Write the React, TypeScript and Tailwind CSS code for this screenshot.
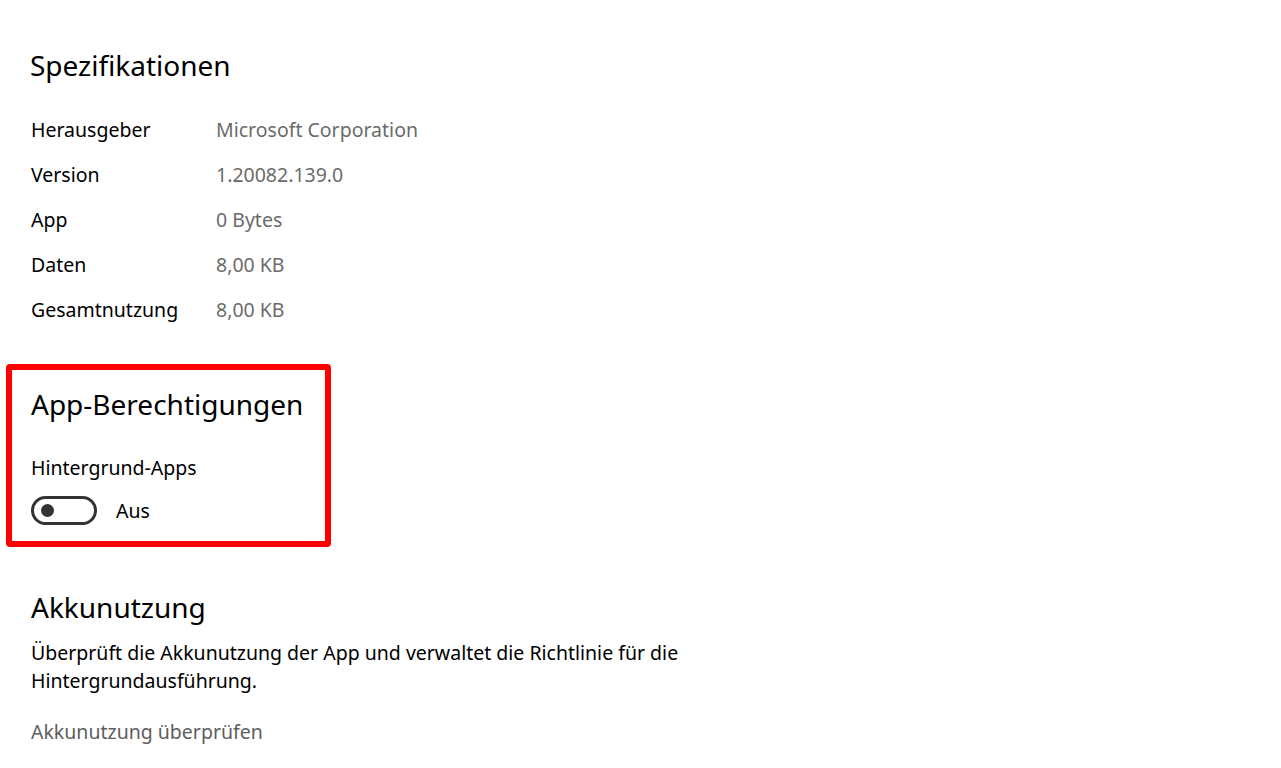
const specs = [
  ["Herausgeber", "Microsoft Corporation"],
  ["Version", "1.20082.139.0"],
  ["App", "0 Bytes"],
  ["Daten", "8,00 KB"],
  ["Gesamtnutzung", "8,00 KB"],
];

export default function App() {
  return (
    <div
      className="min-h-screen bg-white text-black pl-[31px] pt-[45px]"
      style={{ fontFamily: '"Noto Sans", "Open Sans", sans-serif' }}
    >
      <h2 className="text-[28px] leading-[40px] -ml-[1px]">Spezifikationen</h2>

      <div className="mt-[22px]">
        {specs.map(([label, value]) => (
          <div key={label} className="flex h-[45px] items-center text-[19.5px]">
            <span className="w-[185px]">{label}</span>
            <span className="text-[#6b6b6b]">{value}</span>
          </div>
        ))}
      </div>

      <div className="mt-[32px] -ml-[25px] w-[325px] h-[183px] rounded-[4px] border-[6px] border-[#ff0000] pl-[19px] pt-[14px]">
        <h2 className="text-[28px] leading-[40px]">App-Berechtigungen</h2>
        <div className="mt-[30px] text-[19.5px] leading-[28px]">Hintergrund-Apps</div>
        <div className="mt-[14px] flex items-center">
          <div className="w-[66px] h-[29px] rounded-full border-[3px] border-[#333] flex items-center pl-[7px]">
            <div className="w-[13px] h-[13px] rounded-full bg-[#333]" />
          </div>
          <span className="ml-[19px] text-[19.5px]">Aus</span>
        </div>
      </div>

      <h2 className="mt-[40px] text-[28px] leading-[40px]">Akkunutzung</h2>
      <p className="mt-[12px] w-[680px] text-[19.5px] leading-[28px]">
        Überprüft die Akkunutzung der App und verwaltet die Richtlinie für die Hintergrundausführung.
      </p>
      <div className="mt-[23px] text-[19.5px] leading-[28px] text-[#5e5e5e]">Akkunutzung überprüfen</div>
    </div>
  );
}
